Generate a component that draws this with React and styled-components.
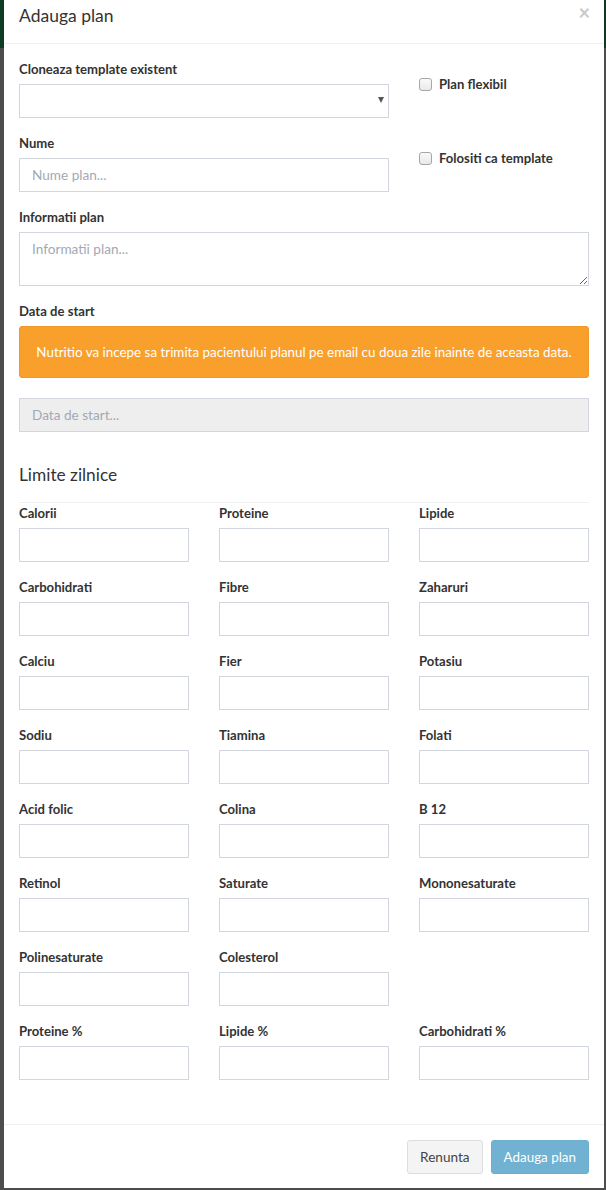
import React from "react";
import styled, { createGlobalStyle } from "styled-components";

const Global = createGlobalStyle`
  html, body { margin: 0; padding: 0; }
  body {
    background: #4d4d4d;
    font-family: Lato, "Open Sans", sans-serif;
    font-size: 14px;
    color: #333;
  }
  * { box-sizing: border-box; }
`;

const Backdrop = styled.div`
  width: 606px;
  height: 1190px;
  background: linear-gradient(to bottom, #0d3b26 0, #0d3b26 48px, #4d4d4d 48px);
  padding: 0 2px 2px 4px;
`;

const Modal = styled.div`
  background: #fff;
  display: flex;
  flex-direction: column;
`;

const Header = styled.div`
  flex-shrink: 0;
  height: 44px;
  border-bottom: 1px solid #f0f0f0;
  display: flex;
  align-items: flex-start;
  justify-content: space-between;
  padding: 4px 14px 0 15px;
`;

const Title = styled.h4`
  margin: 0;
  font-size: 17.5px;
  font-weight: 400;
  line-height: 24px;
  color: #333;
`;

const Close = styled.span`
  font-size: 20px;
  line-height: 16px;
  font-weight: 700;
  color: #c9c9c9;
`;

const Body = styled.div`
  flex-shrink: 0;
  padding: 15px 15px 29px;
`;

const Row = styled.div`
  display: grid;
  grid-template-columns: ${(p) => p.$cols || "1fr"};
  column-gap: 30px;
`;

const Group = styled.div`
  margin-bottom: 15px;
`;

const Label = styled.label`
  display: block;
  font-weight: 700;
  font-size: 13.1px;
  line-height: 20px;
  margin-bottom: 5px;
  color: #333;
`;

const Input = styled.input`
  display: block;
  width: 100%;
  height: 34px;
  padding: 6px 12px;
  border: 1px solid #d2d6de;
  border-radius: 0;
  font-family: inherit;
  font-size: 13.6px;
  color: #555;
  background: ${(p) => (p.disabled ? "#eee" : "#fff")};
  &::placeholder { color: #a3a9b4; }
`;

const Textarea = styled.textarea`
  display: block;
  width: 100%;
  height: 54px;
  padding: 6px 12px;
  border: 1px solid #d2d6de;
  border-radius: 0;
  font-family: inherit;
  font-size: 13.6px;
  line-height: 20px;
  resize: vertical;
  &::placeholder { color: #a3a9b4; }
`;

const SelectBox = styled.div`
  position: relative;
  height: 34px;
  border: 1px solid #d2d6de;
  background: #fff;
`;

const Caret = styled.span`
  position: absolute;
  right: 4px;
  top: 12px;
  width: 0;
  height: 0;
  border-left: 3.5px solid transparent;
  border-right: 3.5px solid transparent;
  border-top: 6px solid #555;
`;

const CheckRow = styled.label`
  display: flex;
  align-items: center;
  gap: 7px;
  font-weight: 700;
  font-size: 13.1px;
  line-height: 20px;
  margin: ${(p) => p.$mt || "0"} 0 0;
  height: 20px;
`;

const Box = styled.span`
  width: 13px;
  height: 13px;
  border: 1px solid #a6a6a6;
  border-radius: 3px;
  background: linear-gradient(#fafafa, #e9e9e9);
`;

const Alert = styled.div`
  background: #f9a02c;
  border: 1px solid #ef9728;
  border-radius: 3px;
  color: #fff;
  font-size: 13.4px;
  line-height: 20px;
  padding: 15px;
  text-align: center;
  margin-bottom: 20px;
`;

const Legend = styled.div`
  font-size: 17.3px;
  line-height: 20px;
  padding: 18px 0 17px;
  border-bottom: 1px solid #f0f0f0;
  color: #333;
`;

const Footer = styled.div`
  flex-shrink: 0;
  border-top: 1px solid #f0f0f0;
  padding: 15px 15px 14px;
  display: flex;
  justify-content: flex-end;
  gap: 8px;
`;

const Button = styled.button`
  height: 34px;
  padding: 6px 12px;
  font-family: inherit;
  font-size: ${(p) => (p.$primary ? "13.4px" : "13.6px")};
  border-radius: 3px;
  border: 1px solid ${(p) => (p.$primary ? "#6eaed0" : "#ddd")};
  background: ${(p) => (p.$primary ? "#71b1d1" : "#f4f4f4")};
  color: ${(p) => (p.$primary ? "#fff" : "#444")};
`;

const limits = [
  "Calorii", "Proteine", "Lipide",
  "Carbohidrati", "Fibre", "Zaharuri",
  "Calciu", "Fier", "Potasiu",
  "Sodiu", "Tiamina", "Folati",
  "Acid folic", "Colina", "B 12",
  "Retinol", "Saturate", "Mononesaturate",
  "Polinesaturate", "Colesterol", null,
  "Proteine %", "Lipide %", "Carbohidrati %",
];

export default function App() {
  return (
    <>
      <Global />
      <Backdrop>
        <Modal>
          <Header>
            <Title>Adauga plan</Title>
            <Close>×</Close>
          </Header>
          <Body>
            <Row $cols="370px 170px">
              <div>
                <Group>
                  <Label>Cloneaza template existent</Label>
                  <SelectBox>
                    <Caret />
                  </SelectBox>
                </Group>
                <Group>
                  <Label>Nume</Label>
                  <Input placeholder="Nume plan..." />
                </Group>
              </div>
              <div>
                <CheckRow $mt="15px">
                  <Box />
                  Plan flexibil
                </CheckRow>
                <CheckRow $mt="54px">
                  <Box />
                  Folositi ca template
                </CheckRow>
              </div>
            </Row>
            <Group>
              <Label>Informatii plan</Label>
              <Textarea placeholder="Informatii plan..." />
            </Group>
            <Group>
              <Label>Data de start</Label>
              <Alert>
                Nutritio va incepe sa trimita pacientului planul pe email cu doua zile inainte de aceasta data.
              </Alert>
              <Input disabled placeholder="Data de start..." />
            </Group>
            <Legend>Limite zilnice</Legend>
            <Row $cols="repeat(3, 1fr)">
              {limits.map((l, i) =>
                l ? (
                  <Group key={i}>
                    <Label>{l}</Label>
                    <Input />
                  </Group>
                ) : (
                  <div key={i} />
                )
              )}
            </Row>
          </Body>
          <Footer>
            <Button>Renunta</Button>
            <Button $primary>Adauga plan</Button>
          </Footer>
        </Modal>
      </Backdrop>
    </>
  );
}
